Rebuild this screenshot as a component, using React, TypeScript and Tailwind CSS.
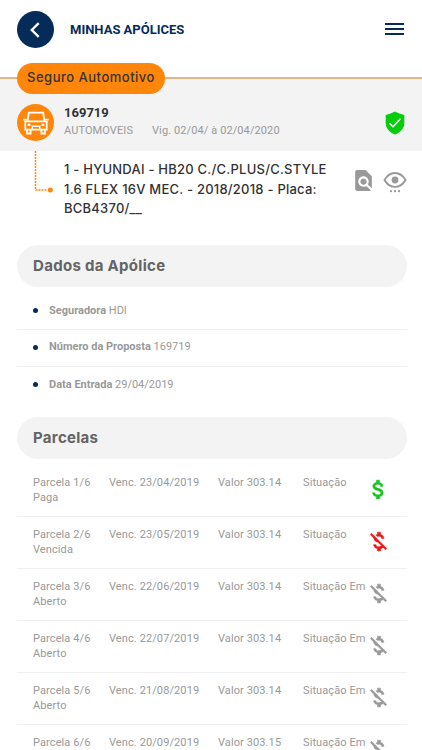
import clsx from 'clsx'
import { MdAttachMoney, MdFindInPage, MdMoneyOff } from 'react-icons/md'

type Installment = {
  number: string
  due: string
  value: string
  status: string
  state: 'paid' | 'late' | 'open'
}

const details = [
  { label: 'Seguradora', value: 'HDI' },
  { label: 'Número da Proposta', value: '169719' },
  { label: 'Data Entrada', value: '29/04/2019' },
]

const installments: Installment[] = [
  { number: '1/6', due: '23/04/2019', value: '303.14', status: 'Paga', state: 'paid' },
  { number: '2/6', due: '23/05/2019', value: '303.14', status: 'Vencida', state: 'late' },
  { number: '3/6', due: '22/06/2019', value: '303.14', status: 'Aberto', state: 'open' },
  { number: '4/6', due: '22/07/2019', value: '303.14', status: 'Aberto', state: 'open' },
  { number: '5/6', due: '21/08/2019', value: '303.14', status: 'Aberto', state: 'open' },
  { number: '6/6', due: '20/09/2019', value: '303.15', status: 'Aberto', state: 'open' },
]

const CarIcon = () => (
  <svg width="26" height="24" viewBox="0 0 26 24" fill="none" stroke="white" strokeWidth="1.8">
    <path d="M4.6 10.3 5.8 1.7h14.4l1.2 8.6" />
    <path d="M2.3 18.6v-8.2h21.4v8.2Z" />
    <path d="M4 18.5v4h3.6v-4M18.4 18.5v4H22v-4" />
    <path d="M.3 8.7h3.5M22.2 8.7h3.5" />
    <path d="M9.3 18.5v-3.3h7.4v3.3" strokeWidth="1.5" />
    <path d="M4.7 13.9h2.7M18.6 13.9h2.7" strokeWidth="2.4" />
  </svg>
)

const ShieldIcon = () => (
  <svg width="20" height="24" viewBox="0 0 20 24">
    <path
      d="M10 .5c2.7 1.5 6 2.6 9.3 3.5v8.2c0 5.2-4.2 9.2-9.3 11.3C4.9 21.4.7 17.4.7 12.2V4C4 3.1 7.3 2 10 .5Z"
      fill="#06cc0c"
    />
    <path d="m4.5 12.3 3.5 3.4 7.5-8" fill="none" stroke="white" strokeWidth="1.6" />
  </svg>
)

const EyeIcon = () => (
  <svg width="24" height="22" viewBox="0 0 24 22" fill="#999">
    <path
      d="M1.5 9C4 4.6 7.6 2 12 2s8 2.6 10.5 7C20 13.4 16.4 15.9 12 15.9S4 13.4 1.5 9Z"
      fill="none"
      stroke="#999"
      strokeWidth="1.9"
    />
    <circle cx="12" cy="9" r="3.4" />
    <circle cx="8" cy="20.2" r="1.1" />
    <circle cx="12" cy="20.2" r="1.1" />
    <circle cx="16" cy="20.2" r="1.1" />
  </svg>
)

const SectionTitle = ({ children }: { children: string }) => (
  <h2 className="flex h-[42px] items-center rounded-full bg-[#f3f3f3] px-4 font-['Inter'] text-[15px] font-bold tracking-[0.3px] text-[#646464]">
    {children}
  </h2>
)

const InstallmentRow = ({ number, due, value, status, state }: Installment) => {
  const Icon = state === 'paid' ? MdAttachMoney : MdMoneyOff

  return (
    <li className="flex h-[52px] items-center border-b border-[#f0f0f0] pl-4 text-[11px] leading-[15.5px] tracking-[0.1px] text-[#999]">
      <div className="w-[76px] shrink-0 self-start pt-[10px]">
        <p>Parcela {number}</p>
        <p>{status}</p>
      </div>
      <p className="w-[109px] shrink-0 self-start pt-[10px]">Venc. {due}</p>
      <p className="w-[85px] shrink-0 self-start pt-[10px]">Valor {value}</p>
      <p className="w-[63px] shrink-0 self-start whitespace-nowrap pt-[10px]">
        {state === 'open' ? 'Situação Em' : 'Situação'}
      </p>
      <Icon
        size={25}
        className={clsx('mb-0.5 shrink-0 [&_path:last-child]:stroke-current [&_path:last-child]:stroke-[0.5]', {
          'text-[#15c51d]': state === 'paid',
          'text-[#ed1515]': state === 'late',
          'text-[#999]': state === 'open',
        })}
      />
    </li>
  )
}

const App = () => (
  <div className="h-[750px] w-[422px] overflow-hidden bg-white font-['Roboto',sans-serif]">
    <header className="flex h-[63px] items-start pl-[17px] pr-[18px] pt-[11px]">
      <button className="flex size-[37px] items-center justify-center rounded-full bg-[#052c59]">
        <svg width="12" height="18" viewBox="0 0 12 18" fill="none" stroke="white" strokeWidth="2.4">
          <path d="M8.7 2.2 1.8 9l6.9 6.8" />
        </svg>
      </button>
      <h1 className="ml-4 mt-[9px] text-[13px] font-bold leading-5 text-[#052c59]">
        MINHAS APÓLICES
      </h1>
      <button className="ml-auto mt-[12px] flex flex-col gap-[3px]">
        <span className="h-[2px] w-[19px] bg-[#052c59]" />
        <span className="h-[2px] w-[19px] bg-[#052c59]" />
        <span className="h-[2px] w-[19px] bg-[#052c59]" />
      </button>
    </header>

    <section className="mt-[14px] h-[74px] border-t-2 border-[#e5b58a] bg-[#f3f3f3] pl-[17px] pr-[17px]">
      <div className="-mt-4 flex h-[31px] w-[148px] items-center justify-center rounded-full bg-[#ff860b] pb-0.5 font-['Inter'] text-[13px] font-medium tracking-[0.5px] text-[#333]">
        Seguro Automotivo
      </div>
      <div className="mt-[10px] flex">
        <div className="flex size-[37px] items-center justify-center rounded-full bg-[#ff860b]">
          <CarIcon />
        </div>
        <div className="ml-[10px]">
          <p className="text-[13px] font-bold leading-[18px] text-[#333]">169719</p>
          <p className="flex text-[11px] leading-[18px] tracking-[0.1px] text-[#999]">
            <span className="w-[88px]">AUTOMOVEIS</span>
            <span>Vig. 02/04/ à 02/04/2020</span>
          </p>
        </div>
        <div className="ml-auto mt-[7px]">
          <ShieldIcon />
        </div>
      </div>
    </section>

    <section className="flex h-[94px] pl-[34px] pr-[15px]">
      <svg width="20" height="42" viewBox="0 0 20 42" className="shrink-0">
        <path d="M1.5 0v39H13" fill="none" stroke="#ff860b" strokeWidth="1.5" strokeDasharray="2 1" />
        <circle cx="16.3" cy="39" r="2.5" fill="#ff860b" />
      </svg>
      <p className="ml-[10px] mt-[9px] w-[281px] whitespace-nowrap font-['Inter'] text-[13px] font-medium leading-[19.5px] tracking-[0.23px] text-[#333]">
        1 - HYUNDAI - HB20 C./C.PLUS/C.STYLE
        <br />
        1.6 FLEX 16V MEC. - 2018/2018 - Placa:
        <br />
        BCB4370/__
      </p>
      <div className="ml-[6px] mt-[17px] flex shrink-0 gap-[7px]">
        <MdFindInPage size={25} className="text-[#999]" />
        <div className="mt-[3px]">
          <EyeIcon />
        </div>
      </div>
    </section>

    <main className="pl-[17px] pr-[15px]">
      <SectionTitle>Dados da Apólice</SectionTitle>
      <ul className="mt-[6px]">
        {details.map(({ label, value }) => (
          <li
            key={label}
            className="flex h-[36.8px] items-center border-b border-[#f0f0f0] pl-4 text-[11px] text-[#999] last:border-b-0"
          >
            <span className="mr-[11px] size-[5px] rounded-full bg-[#052c59]" />
            <span>
              <b>{label}</b> {value}
            </span>
          </li>
        ))}
      </ul>

      <div className="mt-[13.6px]">
        <SectionTitle>Parcelas</SectionTitle>
      </div>
      <ul className="mt-[6px]">
        {installments.map((item) => (
          <InstallmentRow key={item.number} {...item} />
        ))}
      </ul>
    </main>
  </div>
)

export default App
